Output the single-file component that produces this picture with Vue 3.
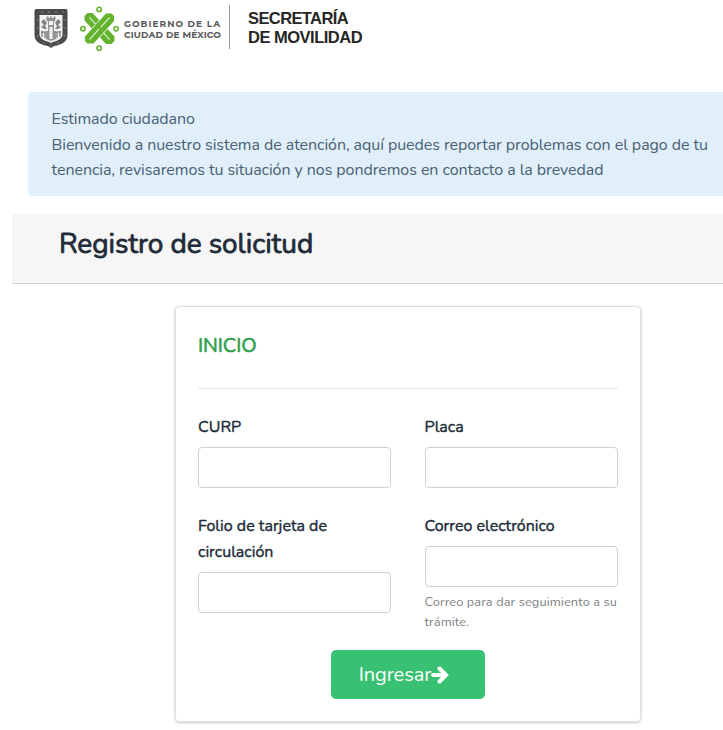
<script setup>
const studs = [
  [8, 4], [15, 4], [22, 4], [29, 4], [3.5, 12], [3.5, 20], [3.5, 28],
  [30.5, 12], [30.5, 20], [30.5, 28], [10, 35], [24, 35], [17, 37.5],
]
const rings = [[19.2, 4.4], [2.9, 23.7], [36.2, 23.7], [19.2, 43.2]]
</script>

<template>
  <div class="page">
    <header class="brand">
      <svg class="shield" viewBox="0 0 34 40" aria-hidden="true">
        <path d="M2 1H32Q33.5 1 33.5 3V27Q33.5 36 20 38L17 40L14 38Q.5 36 .5 27V3Q.5 1 2 1Z" fill="#4b4b4d" />
        <path d="M5.5 7H28.5V27Q28 32 19 34L17 35L15 34Q6 32 5.5 27Z" fill="#f1f1f1" />
        <circle v-for="([x, y], i) in studs" :key="i" :cx="x" :cy="y" r=".9" fill="#77777a" />
        <path d="M12.5 12V8.5H14.5V10H16V8.5H18V10H19.5V8.5H21.5V12L20 14V23H22V31L17 33L12 31V23H14V14Z" fill="#929294" />
        <path d="M15 13H19V17H15ZM15.5 19H18.5V31H15.5Z" fill="#f1f1f1" />
        <path d="M7 14L10 11L13 15L11 18L13 21H10L7 19L10 17ZM27 14L24 11L21 15L23 18L21 21H24L27 19L24 17Z" fill="#838385" />
        <path d="M8 23V29M7 24H12M11 24V30M26 23V29M22 24H27M23 24V30" fill="none" stroke="#737375" stroke-width="1.2" />
      </svg>
      <svg class="emblem" viewBox="0 0 39 46" aria-hidden="true">
        <path d="M12.5 8H7.5L4.5 11V15.5L26 39H31.5L34.5 36V31.5Z" fill="#64b32e" />
        <path d="M9.5 12.5L29.500 34.500" fill="none" stroke="#fff" stroke-width="1.100" />
        <path d="M26 8H31.500L34.500 11V16L13.500 39H7.500L4.500 36V31.500Z" fill="#64b32e" stroke="#fff" stroke-width=".9" />
        <path d="M29.500 12.500L9.500 34.500" fill="none" stroke="#fff" stroke-width="1.100" />
        <path d="M16 19L23 27" fill="none" stroke="#64b32e" stroke-width="2.600" />
        <circle v-for="([x, y], i) in rings" :key="i" :cx="x" :cy="y" r="2.200" fill="#fff" stroke="#64b32e" stroke-width="1.600" />
      </svg>
      <div class="government">
        <span class="gov-first">GOBIERNO DE LA</span>
        <span class="gov-second">CIUDAD DE MÉXICO</span>
      </div>
      <div class="department">
        <span class="dep-first">SECRETARÍA</span>
        <span class="dep-second">DE MOVILIDAD</span>
      </div>
    </header>

    <section class="notice">
      <p>Estimado ciudadano</p>
      <p>Bienvenido a nuestro sistema de atención, aquí puedes reportar problemas con el pago de tu</p>
      <p>tenencia, revisaremos tu situación y nos pondremos en contacto a la brevedad</p>
    </section>

    <div class="titlebar"><h1>Registro de solicitud</h1></div>

    <form class="card" @submit.prevent>
      <h2>INICIO</h2>
      <hr />
      <div class="grid">
        <div class="field">
          <label for="curp">CURP</label>
          <input id="curp" type="text" />
        </div>
        <div class="field">
          <label for="placa">Placa</label>
          <input id="placa" type="text" />
        </div>
        <div class="field">
          <label for="folio">Folio de tarjeta de<br />circulación</label>
          <input id="folio" type="text" />
        </div>
        <div class="field">
          <label for="correo">Correo electrónico</label>
          <input id="correo" type="text" />
          <small>Correo para dar seguimiento a su<br />trámite.</small>
        </div>
      </div>
      <button type="submit">
        <span>Ingresar</span>
        <svg viewBox="0 0 18 18" aria-hidden="true">
          <path d="M2 9H14M8.5 2.5L15 9L8.5 15.5" fill="none" stroke="#fff" stroke-width="4" stroke-linecap="round" stroke-linejoin="miter" />
        </svg>
      </button>
    </form>
  </div>
</template>

<style>
body { background: #fff; overflow: hidden; }
</style>

<style scoped>
* { box-sizing: border-box; }
.page {
  height: 730px;
  overflow: hidden;
  color: #212b38;
  font-family: Nunito, Lato, "Noto Sans", sans-serif;
  font-size: 16px;
  line-height: 25.6px;
}
.brand { display: flex; height: 92px; padding: 5px 0 0 34px; white-space: nowrap; }
.shield { width: 34px; height: 40px; margin-top: 3px; }
.emblem { width: 39px; height: 46px; margin-left: 12px; }
.government {
  display: flex;
  flex-direction: column;
  width: 111px;
  height: 44px;
  padding: 13px 0 0 5px;
  border-right: 1px solid #999;
  color: #59595b;
  font: 700 9px/11px Montserrat, Inter, sans-serif;
}
.gov-first { letter-spacing: 1.02px; }
.gov-second { letter-spacing: .16px; }
.department {
  display: flex;
  flex-direction: column;
  padding: 4px 0 0 18px;
  color: #262626;
  font: 700 16.5px/19px "Liberation Sans", sans-serif;
}
.dep-first { letter-spacing: -.6px; }
.dep-second { letter-spacing: -.5px; }
.notice {
  height: 104px;
  margin-left: 28px;
  padding: 15.2px 0 0 23.5px;
  border-radius: 4px 0 0 4px;
  background: #e1effa;
  color: #486174;
  line-height: 25.5px;
  letter-spacing: -.062px;
  white-space: nowrap;
}
.notice p { margin: 0; }
.titlebar {
  height: 70px;
  margin: 18px 0 0 12px;
  padding: 13px 0 0 47px;
  border-bottom: 1px solid #d2d3d4;
  background: #f6f6f6;
}
h1 {
  margin: 0;
  font-size: 28px;
  font-weight: 400;
  line-height: 34px;
  letter-spacing: -.06px;
  -webkit-text-stroke: .8px currentColor;
}
.card {
  display: flex;
  flex-direction: column;
  width: 466px;
  height: 416px;
  margin: 22px 0 0 175px;
  padding: 25px 22px 0;
  border: 1px solid #dedfe0;
  border-radius: 4px;
  box-shadow: 0 1px 3px rgba(0, 0, 0, .22);
}
h2 {
  margin: 0;
  color: #309f4c;
  font-size: 20px;
  font-weight: 400;
  line-height: 28px;
  letter-spacing: -.1px;
  -webkit-text-stroke: .6px currentColor;
}
hr { width: 100%; height: 1px; margin: 28px 0 26px; border: 0; background: #e6e7e7; }
.grid { display: grid; grid-template-columns: 194px 194px; column-gap: 32.5px; row-gap: 25px; }
.field { display: flex; flex-direction: column; }
label { margin-bottom: 6.4px; white-space: nowrap; -webkit-text-stroke: .4px currentColor; }
.field:nth-child(n + 3) { padding-top: 1px; }
input {
  width: 193.4px;
  height: 41px;
  margin: 0;
  border: 1px solid #ced1d3;
  border-radius: 4px;
  background: #fff;
  outline: 0;
}
small {
  margin-top: 4.6px;
  color: #7c7f82;
  font-size: 12.8px;
  line-height: 20.4px;
  letter-spacing: .1px;
  white-space: nowrap;
}
button {
  display: flex;
  align-items: center;
  justify-content: center;
  align-self: center;
  width: 154px;
  height: 49px;
  margin: 17.4px 0 0;
  padding: 1px 8px 0 0;
  border: 0;
  border-radius: 5px;
  background: #38c172;
  color: #fff;
  font: 400 20px/30px Nunito, Lato, sans-serif;
  letter-spacing: -.1px;
}
button svg { width: 18px; height: 18px; }
</style>
